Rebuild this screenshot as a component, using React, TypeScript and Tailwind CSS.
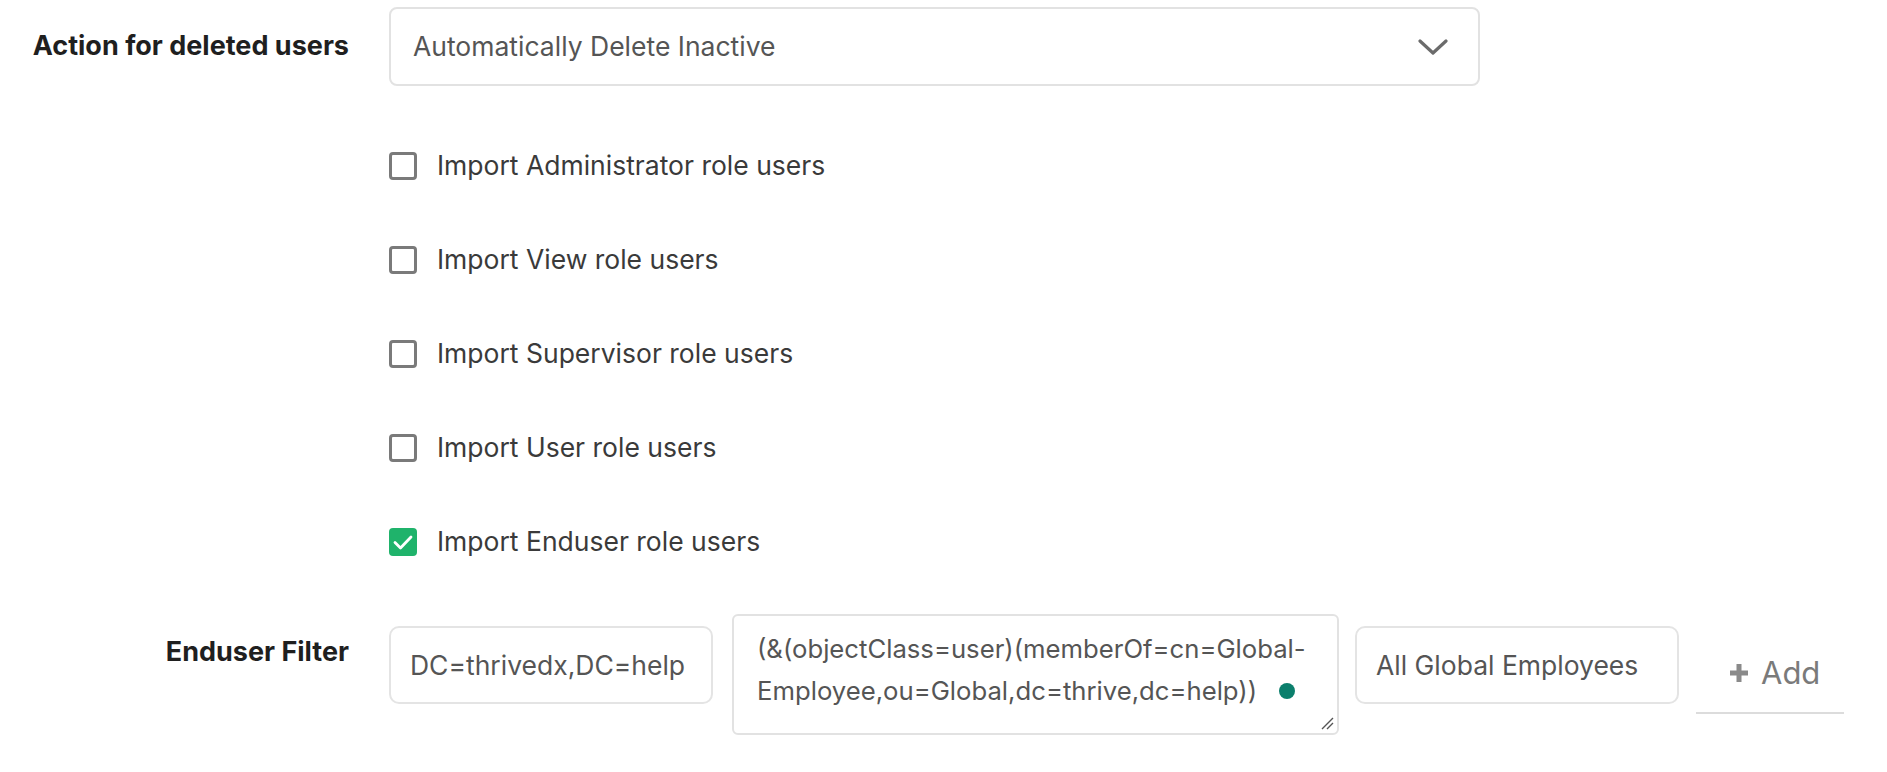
import { useState } from "react";

const roles = [
  { id: "admin", label: "Import Administrator role users" },
  { id: "view", label: "Import View role users" },
  { id: "supervisor", label: "Import Supervisor role users" },
  { id: "user", label: "Import User role users" },
  { id: "enduser", label: "Import Enduser role users" },
];

const Checkbox = ({ checked, onClick }: { checked: boolean; onClick: () => void }) => (
  <button
    type="button"
    onClick={onClick}
    className={`flex h-[28px] w-[28px] shrink-0 items-center justify-center rounded-[4px] ${
      checked ? "bg-[#1fb36b]" : "border-[3px] border-[#7a7a7a] bg-white"
    }`}
  >
    {checked && (
      <svg width="24" height="24" viewBox="0 0 24 24" fill="none">
        <path d="M4 12.5l5.5 5.5L20 7" stroke="white" strokeWidth="2.8" strokeLinecap="round" strokeLinejoin="round" />
      </svg>
    )}
  </button>
);

const App = () => {
  const [checked, setChecked] = useState<Record<string, boolean>>({ enduser: true });

  const toggle = (id: string) => setChecked({ ...checked, [id]: !checked[id] });

  return (
    <div className="min-h-[772px] w-full bg-white font-['Inter',sans-serif]">
      <div className="grid grid-cols-[349px_1fr] gap-x-10 pt-[7px]">
        {/* action for deleted users */}
        <div className="self-center whitespace-nowrap text-right text-[27px] font-bold text-[#1f1f1f]">
          Action for deleted users
        </div>
        <div className="flex h-[79px] w-[1091px] items-center justify-between rounded-[8px] border-2 border-[#e2e2e2] pl-[22px] pr-[30px]">
          <span className="text-[26.5px] text-[#555]">Automatically Delete Inactive</span>
          <svg width="30" height="18" viewBox="0 0 30 18" fill="none">
            <path d="M2 3l13 12 13-12" stroke="#6b6b6b" strokeWidth="3.2" strokeLinecap="round" strokeLinejoin="round" />
          </svg>
        </div>

        {/* role checkboxes */}
        <div className="col-start-2 mt-[66px] flex flex-col gap-[66px]">
          {roles.map((r) => (
            <label key={r.id} className="flex h-[28px] cursor-pointer items-center gap-[20px]">
              <Checkbox checked={!!checked[r.id]} onClick={() => toggle(r.id)} />
              <span className="text-[26.5px] text-[#3a3a3a]">{r.label}</span>
            </label>
          ))}
        </div>

        {/* enduser filter */}
        <div className="mt-[58px] pt-[18px] text-right text-[27px] font-bold leading-[40px] text-[#1f1f1f]">
          Enduser Filter
        </div>
        <div className="mt-[58px] flex items-start">
          <input
            className="mt-[12px] h-[78px] w-[324px] rounded-[10px] border-2 border-[#e4e4e4] px-[19px] text-[26.5px] text-[#555] outline-none"
            defaultValue="DC=thrivedx,DC=help"
          />
          <div className="relative ml-[19px] h-[121px] w-[607px] whitespace-nowrap rounded-[6px] border-2 border-[#e2e2e2] px-[23px] pt-[12px] text-[25.7px] leading-[42px] text-[#555]">
            <div>(&amp;(objectClass=user)(memberOf=cn=Global-</div>
            <div>Employee,ou=Global,dc=thrive,dc=help))</div>
            <span className="absolute left-[545px] top-[67px] h-[16px] w-[16px] rounded-full bg-[#0b7f6c]" />
            <svg className="absolute bottom-[3px] right-[3px]" width="14" height="14" viewBox="0 0 14 14" fill="none">
              <path d="M2 13L13 2M7 13l6-6" stroke="#555" strokeWidth="1.4" />
            </svg>
          </div>
          <input
            className="ml-[16px] mt-[12px] h-[78px] w-[324px] rounded-[10px] border-2 border-[#e4e4e4] px-[19px] text-[26.5px] text-[#555] outline-none"
            defaultValue="All Global Employees"
          />
          <button
            type="button"
            className="ml-[17px] mt-[20px] flex h-[80px] w-[148px] items-center gap-[11px] border-b-2 border-[#dcdcdc] pl-[32px] text-[31px] text-[#7a7a7a]"
          >
            <svg width="22" height="22" viewBox="0 0 22 22">
              <path d="M11 2v18M2 11h18" stroke="#8a8a8a" strokeWidth="5" />
            </svg>
            Add
          </button>
        </div>
      </div>
    </div>
  );
};

export default App;
